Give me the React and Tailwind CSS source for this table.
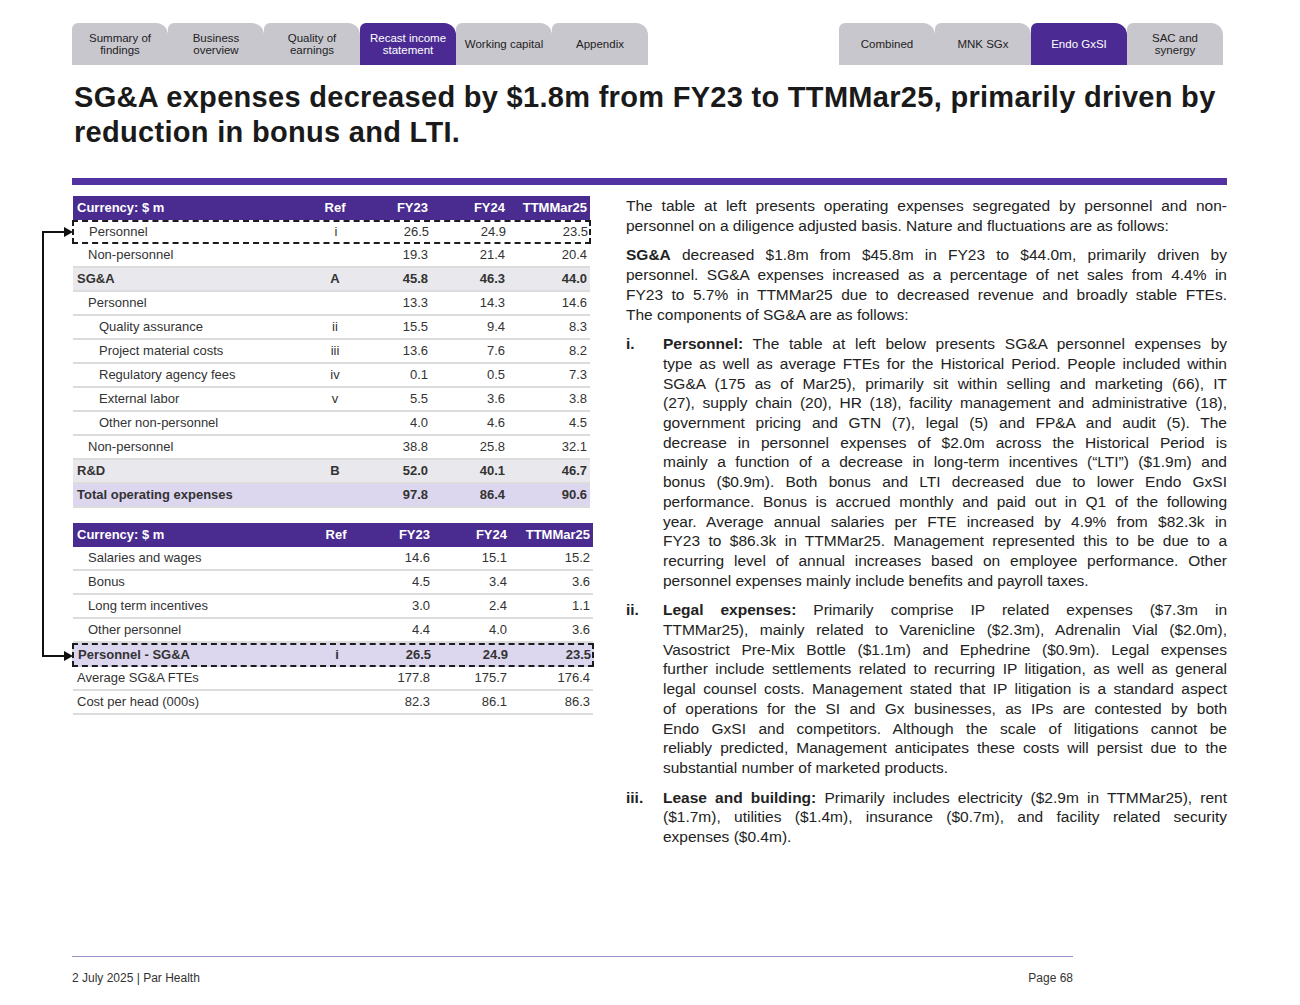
import React from "react";

const leftTabs = [
  ["Summary of", "findings"],
  ["Business", "overview"],
  ["Quality of", "earnings"],
  ["Recast income", "statement"],
  ["Working capital"],
  ["Appendix"],
];
const rightTabs = [["Combined"], ["MNK SGx"], ["Endo GxSI"], ["SAC and", "synergy"]];

const opex = [
  { label: "Personnel", indent: 1, ref: "i", v: ["26.5", "24.9", "23.5"], dashed: true },
  { label: "Non-personnel", indent: 1, ref: "", v: ["19.3", "21.4", "20.4"] },
  { label: "SG&A", indent: 0, ref: "A", v: ["45.8", "46.3", "44.0"], bold: true, bg: "gray" },
  { label: "Personnel", indent: 1, ref: "", v: ["13.3", "14.3", "14.6"] },
  { label: "Quality assurance", indent: 2, ref: "ii", v: ["15.5", "9.4", "8.3"] },
  { label: "Project material costs", indent: 2, ref: "iii", v: ["13.6", "7.6", "8.2"] },
  { label: "Regulatory agency fees", indent: 2, ref: "iv", v: ["0.1", "0.5", "7.3"] },
  { label: "External labor", indent: 2, ref: "v", v: ["5.5", "3.6", "3.8"] },
  { label: "Other non-personnel", indent: 2, ref: "", v: ["4.0", "4.6", "4.5"] },
  { label: "Non-personnel", indent: 1, ref: "", v: ["38.8", "25.8", "32.1"] },
  { label: "R&D", indent: 0, ref: "B", v: ["52.0", "40.1", "46.7"], bold: true, bg: "gray" },
  { label: "Total operating expenses", indent: 0, ref: "", v: ["97.8", "86.4", "90.6"], bold: true, bg: "lav" },
];

const personnel = [
  { label: "Salaries and wages", indent: 1, ref: "", v: ["14.6", "15.1", "15.2"] },
  { label: "Bonus", indent: 1, ref: "", v: ["4.5", "3.4", "3.6"] },
  { label: "Long term incentives", indent: 1, ref: "", v: ["3.0", "2.4", "1.1"] },
  { label: "Other personnel", indent: 1, ref: "", v: ["4.4", "4.0", "3.6"] },
  { label: "Personnel - SG&A", indent: 0, ref: "i", v: ["26.5", "24.9", "23.5"], bold: true, bg: "lav", dashed: true },
  { label: "Average SG&A FTEs", indent: 0, ref: "", v: ["177.8", "175.7", "176.4"] },
  { label: "Cost per head (000s)", indent: 0, ref: "", v: ["82.3", "86.1", "86.3"] },
];

function Tab({ lines, active }) {
  return (
    <div
      className={
        "w-[96px] h-[42px] rounded-tl-[6px] rounded-tr-[12px] flex flex-col items-center justify-center text-[11.5px] leading-[12px] text-center " +
        (active ? "bg-[#4b2b93] text-white" : "bg-[#c9c7ce] text-[#222]")
      }
    >
      {lines.map((l, i) => (
        <span key={i}>{l}</span>
      ))}
    </div>
  );
}

function Table({ rows, wide }) {
  const cols = wide
    ? "grid-cols-[230px_66px_65px_77px_82px]"
    : "grid-cols-[230px_64px_65px_77px_81px]";
  return (
    <div className={wide ? "w-[520px]" : "w-[517px]"}>
      <div className={"grid h-[24px] items-center bg-[#4a2b90] text-white font-bold text-[13px] " + cols}>
        <div className="pl-[4px]">Currency: $ m</div>
        <div className="text-center">Ref</div>
        <div className="text-right pr-[4px]">FY23</div>
        <div className="text-right pr-[4px]">FY24</div>
        <div className="text-right pr-[3px]">TTMMar25</div>
      </div>
      {rows.map((r, i) => {
        const bg = r.bg === "gray" ? "bg-[#e9e8ed]" : r.bg === "lav" ? "bg-[#dcd6ef]" : "bg-white";
        const border = r.dashed
          ? "border-2 border-dashed border-[#1c1c1c] -ml-[1px] -mr-[1px]"
          : "border-b-2 border-[#dcdcdc]";
        const pad = r.indent === 2 ? "pl-[26px]" : r.indent === 1 ? "pl-[15px]" : "pl-[4px]";
        return (
          <div
            key={i}
            className={"grid h-[24px] items-center text-[13px] text-[#333] " + cols + " " + bg + " " + border + (r.bold ? " font-bold" : "")}
          >
            <div className={pad}>{r.label}</div>
            <div className="text-center">{r.ref}</div>
            <div className="text-right pr-[4px]">{r.v[0]}</div>
            <div className="text-right pr-[4px]">{r.v[1]}</div>
            <div className="text-right pr-[3px]">{r.v[2]}</div>
          </div>
        );
      })}
    </div>
  );
}

// justified block with the same line breaks as the source document
function Lines({ lines }) {
  return (
    <div>
      {lines.map((l, i) => (
        <div
          key={i}
          className={
            "whitespace-nowrap " +
            (i < lines.length - 1 ? "text-justify [text-align-last:justify]" : "text-left")
          }
        >
          {l}
        </div>
      ))}
    </div>
  );
}

function Item({ n, lines }) {
  return (
    <div className="flex mt-[10px]">
      <div className="w-[37px] shrink-0 font-bold">{n}</div>
      <div className="flex-1">
        <Lines lines={lines} />
      </div>
    </div>
  );
}

export default function App() {
  return (
    <div className="relative w-[1300px] h-[1005px] bg-white overflow-hidden font-['Liberation_Sans',Arial,sans-serif] text-[#1f1f1f]">
      {/* tab navigation */}
      <div className="flex justify-between pl-[72px] pr-[77px] pt-[23px]">
        <div className="flex">
          {leftTabs.map((t, i) => (
            <Tab key={i} lines={t} active={i === 3} />
          ))}
        </div>
        <div className="flex">
          {rightTabs.map((t, i) => (
            <Tab key={i} lines={t} active={i === 2} />
          ))}
        </div>
      </div>

      {/* title */}
      <h1 className="pl-[74px] pt-[15px] pr-[50px] text-[29px] leading-[35px] font-bold tracking-[0.3px] text-[#1a1a1a]">
        SG&amp;A expenses decreased by $1.8m from FY23 to TTMMar25, primarily driven by reduction in bonus and LTI.
      </h1>
      <div className="ml-[72px] mt-[28px] w-[1155px] h-[7px] bg-[#5232a0]" />

      <div className="flex pl-[73px] pt-[11px] gap-[35px]">
        {/* tables */}
        <div className="relative w-[518px]">
          <Table rows={opex} />
          <div className="mt-[15px]">
            <Table rows={personnel} wide />
          </div>
          {/* connector arrow */}
          <div className="absolute left-[-31px] top-[35px] w-[2px] h-[425px] bg-[#111]" />
          <div className="absolute left-[-31px] top-[35px] w-[24px] h-[2px] bg-[#111]" />
          <div className="absolute left-[-31px] top-[459px] w-[24px] h-[2px] bg-[#111]" />
          <svg className="absolute left-[-9px] top-[31px]" width="9" height="10" viewBox="0 0 9 10">
            <path d="M0 0 L9 5 L0 10 Z" fill="#111" />
          </svg>
          <svg className="absolute left-[-9px] top-[455px]" width="9" height="10" viewBox="0 0 9 10">
            <path d="M0 0 L9 5 L0 10 Z" fill="#111" />
          </svg>
        </div>

        {/* commentary */}
        <div className="w-[601px] text-[15.5px] leading-[19.7px] text-[#222]">
          <Lines
            lines={[
              "The table at left presents operating expenses segregated by personnel and non-",
              "personnel on a diligence adjusted basis. Nature and fluctuations are as follows:",
            ]}
          />
          <div className="mt-[10px]">
            <Lines
              lines={[
                <><b>SG&amp;A</b> decreased $1.8m from $45.8m in FY23 to $44.0m, primarily driven by</>,
                "personnel. SG&A expenses increased as a percentage of net sales from 4.4% in",
                "FY23 to 5.7% in TTMMar25 due to decreased revenue and broadly stable FTEs.",
                "The components of SG&A are as follows:",
              ]}
            />
          </div>
          <Item
            n="i."
            lines={[
              <><b>Personnel:</b> The table at left below presents SG&amp;A personnel expenses by</>,
              "type as well as average FTEs for the Historical Period. People included within",
              "SG&A (175 as of Mar25), primarily sit within selling and marketing (66), IT",
              "(27), supply chain (20), HR (18), facility management and administrative (18),",
              "government pricing and GTN (7), legal (5) and FP&A and audit (5). The",
              "decrease in personnel expenses of $2.0m across the Historical Period is",
              "mainly a function of a decrease in long-term incentives (“LTI”) ($1.9m) and",
              "bonus ($0.9m). Both bonus and LTI decreased due to lower Endo GxSI",
              "performance. Bonus is accrued monthly and paid out in Q1 of the following",
              "year. Average annual salaries per FTE increased by 4.9% from $82.3k in",
              "FY23 to $86.3k in TTMMar25. Management represented this to be due to a",
              "recurring level of annual increases based on employee performance. Other",
              "personnel expenses mainly include benefits and payroll taxes.",
            ]}
          />
          <Item
            n="ii."
            lines={[
              <><b>Legal expenses:</b> Primarily comprise IP related expenses ($7.3m in</>,
              "TTMMar25), mainly related to Varenicline ($2.3m), Adrenalin Vial ($2.0m),",
              "Vasostrict Pre-Mix Bottle ($1.1m) and Ephedrine ($0.9m). Legal expenses",
              "further include settlements related to recurring IP litigation, as well as general",
              "legal counsel costs. Management stated that IP litigation is a standard aspect",
              "of operations for the SI and Gx businesses, as IPs are contested by both",
              "Endo GxSI and competitors. Although the scale of litigations cannot be",
              "reliably predicted, Management anticipates these costs will persist due to the",
              "substantial number of marketed products.",
            ]}
          />
          <Item
            n="iii."
            lines={[
              <><b>Lease and building:</b> Primarily includes electricity ($2.9m in TTMMar25), rent</>,
              "($1.7m), utilities ($1.4m), insurance ($0.7m), and facility related security",
              "expenses ($0.4m).",
            ]}
          />
        </div>
      </div>

      {/* footer */}
      <div className="absolute left-[72px] top-[956px] w-[1001px]">
        <div className="h-[1px] bg-[#9b90c8]" />
        <div className="flex justify-between pt-[12px] text-[12px] text-[#333]">
          <span>2 July 2025 | Par Health</span>
          <span>Page 68</span>
        </div>
      </div>
    </div>
  );
}
